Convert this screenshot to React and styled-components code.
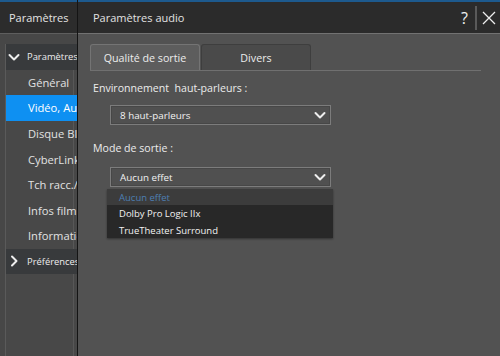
import React from 'react';
import styled, { createGlobalStyle } from 'styled-components';

const FONT = '"Open Sans","Noto Sans","Liberation Sans",sans-serif';

const GlobalStyle = createGlobalStyle`
  html, body { margin:0; padding:0; background:#474747; }
  body { font-family:${FONT}; }
`;

const Screen = styled.div`
  position:relative;
  width:500px;
  height:356px;
  overflow:hidden;
  background:#474747;
  font-family:${FONT};
  color:#e6e6e6;
`;

/* main settings window, behind the dialog */
const MainWindow = styled.div`
  display:flex;
  flex-direction:column;
  height:100%;
`;
const TopStrip = styled.div`
  height:2px;
  background:#1d5a8e;
`;
const TitleBar = styled.div`
  height:31px;
  display:flex;
  align-items:center;
  padding-left:9px;
  background:#2c2c2c;
  border-bottom:1px solid #5e5e5e;
  font-size:11px;
  color:#e4e4e4;
`;
const MainBody = styled.div`
  flex:1;
  display:flex;
  padding:10px 0 0 5px;
`;
const SideList = styled.div`
  width:67px;
  border-left:1px solid #5a5a5a;
  border-right:1px solid #575757;
  background:#484848;
  display:flex;
  flex-direction:column;
  white-space:nowrap;
`;
const GroupRow = styled.div`
  width:76px;
  height:25.5px;
  flex-shrink:0;
  display:flex;
  align-items:center;
  gap:7px;
  padding-left:2px;
  box-sizing:border-box;
  background:#383a3c;
  font-size:9.4px;
  color:#ececec;
  svg { flex-shrink:0; }
`;
const ItemRow = styled.div`
  width:76px;
  height:25.6px;
  flex-shrink:0;
  display:flex;
  align-items:center;
  padding-left:22px;
  box-sizing:border-box;
  font-size:11.2px;
  background:${p => (p.$active ? '#0e90f2' : 'transparent')};
  color:${p => (p.$active ? '#ffffff' : '#e2e2e2')};
`;

/* audio dialog on top */
const Dialog = styled.div`
  position:absolute;
  left:77px;
  top:0;
  width:422px;
  height:356px;
  display:flex;
  flex-direction:column;
  background:#525252;
  border-left:1px solid #141414;
  border-right:1px solid #6a6a6a;
`;
const DialogTitle = styled.div`
  height:31px;
  display:flex;
  align-items:center;
  justify-content:space-between;
  padding:0 4px 0 15px;
  background:#2b2b2b;
  border-top:2px solid #1d5a8e;
  border-bottom:1px solid #727272;
  font-size:11px;
  color:#e2e2e2;
`;
const TitleTools = styled.div`
  display:flex;
  align-items:center;
  height:100%;
`;
const HelpMark = styled.span`
  font-size:16px;
  color:#f0f0f0;
  padding-right:3px;
`;
const ToolSep = styled.div`
  width:2px;
  height:24px;
  background:#5a5a5a;
  margin:0 5px 0 4px;
`;
const Content = styled.div`
  flex:1;
  padding:10px 19px 0 12px;
  display:flex;
  flex-direction:column;
`;
const Tabs = styled.div`
  display:flex;
  border-bottom:1px solid #707070;
  height:26px;
`;
const Tab = styled.div`
  width:108px;
  display:flex;
  align-items:center;
  justify-content:center;
  font-size:10.7px;
  color:#ececec;
  border:1px solid ${p => (p.$active ? '#747474' : '#3e3e3e')};
  border-bottom:none;
  border-radius:3px 3px 0 0;
  background:${p => (p.$active ? '#5d5d5d' : '#4a4a4a')};
  margin-right:1px;
`;
const Label = styled.div`
  font-size:10.6px;
  color:#ececec;
  margin:${p => p.$top}px 0 0 3px;
  height:18px;
  line-height:18px;
  white-space:pre;
`;
const SelectWrap = styled.div`
  position:relative;
  margin:${p => p.$top}px 0 0 20px;
  width:221px;
`;
const Select = styled.div`
  height:18px;
  border:1px solid #7c7c7c;
  box-shadow:inset 0 0 0 1px #474747;
  background:#505050;
  display:flex;
  align-items:center;
  justify-content:space-between;
  padding:0 4px 0 9px;
  font-size:9.8px;
  color:#f2f2f2;
`;
const Menu = styled.div`
  position:absolute;
  left:-3px;
  top:22px;
  width:226px;
  background:#282828;
  box-shadow:0 1px 2px rgba(0,0,0,0.4);
  font-size:9.5px;
`;
const MenuItem = styled.div`
  height:${p => p.$h}px;
  display:flex;
  align-items:center;
  padding-left:12px;
  background:${p => (p.$first ? '#3c3c3c' : 'transparent')};
  color:${p => (p.$first ? '#4d7fb3' : '#f2f2f2')};
`;

const Chevron = ({ dir = 'down', size = 12, color = '#eeeeee' }) => (
  <svg width={size} height={size} viewBox="0 0 12 12" fill="none">
    {dir === 'down' ? (
      <path d="M1.5 4 L6 8.5 L10.5 4" stroke={color} strokeWidth="2" strokeLinecap="round" strokeLinejoin="round" />
    ) : (
      <path d="M4 1.5 L8.5 6 L4 10.5" stroke={color} strokeWidth="2" strokeLinecap="round" strokeLinejoin="round" />
    )}
  </svg>
);

const CloseIcon = () => (
  <svg width="14" height="14" viewBox="0 0 14 14" fill="none">
    <path d="M1 1 L13 13 M13 1 L1 13" stroke="#eeeeee" strokeWidth="1.3" />
  </svg>
);

const items = ['Général', 'Vidéo, Audio', 'Disque Blu-ray', 'CyberLink', 'Tch racc./Clav.', 'Infos film', 'Informations'];

export default function App() {
  return (
    <Screen>
      <GlobalStyle />
      <MainWindow>
        <TopStrip />
        <TitleBar>Paramètres</TitleBar>
        <MainBody>
          <SideList>
            <GroupRow>
              <Chevron dir="down" />
              Paramètres
            </GroupRow>
            {items.map((it, i) => (
              <ItemRow key={it} $active={i === 1}>{it}</ItemRow>
            ))}
            <GroupRow>
              <Chevron dir="right" />
              Préférences
            </GroupRow>
          </SideList>
        </MainBody>
      </MainWindow>

      <Dialog>
        <DialogTitle>
          Paramètres audio
          <TitleTools>
            <HelpMark>?</HelpMark>
            <ToolSep />
            <CloseIcon />
          </TitleTools>
        </DialogTitle>
        <Content>
          <Tabs>
            <Tab $active>Qualité de sortie</Tab>
            <Tab>Divers</Tab>
          </Tabs>
          <Label $top={8}>{'Environnement  haut-parleurs :'}</Label>
          <SelectWrap $top={8}>
            <Select>
              8 haut-parleurs
              <Chevron />
            </Select>
          </SelectWrap>
          <Label $top={14}>Mode de sortie :</Label>
          <SelectWrap $top={10}>
            <Select>
              Aucun effet
              <Chevron />
            </Select>
            <Menu>
              <MenuItem $first $h={16}>Aucun effet</MenuItem>
              <MenuItem $h={17}>Dolby Pro Logic IIx</MenuItem>
              <MenuItem $h={16}>TrueTheater Surround</MenuItem>
            </Menu>
          </SelectWrap>
        </Content>
      </Dialog>
    </Screen>
  );
}
